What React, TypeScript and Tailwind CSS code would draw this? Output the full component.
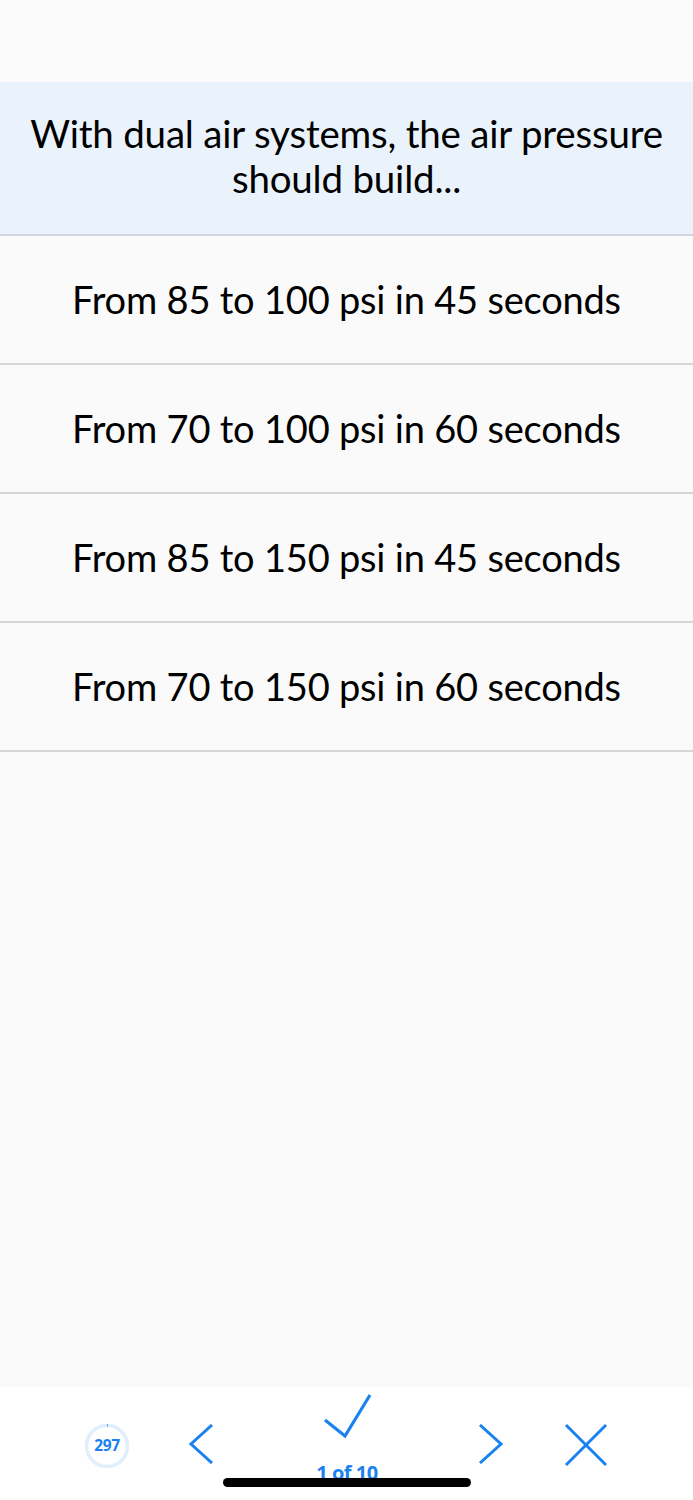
import React from 'react';

const answers = [
  'From 85 to 100 psi in 45 seconds',
  'From 70 to 100 psi in 60 seconds',
  'From 85 to 150 psi in 45 seconds',
  'From 70 to 150 psi in 60 seconds',
];

function ScoreRing() {
  return (
    <div className="relative w-[44px] h-[44px] mt-[37px] flex items-center justify-center">
      <svg width="44" height="44" viewBox="0 0 44 44" className="absolute inset-0">
        <circle cx="22" cy="22" r="20.5" fill="none" stroke="#e1eefc" strokeWidth="3.5" />
        <path d="M22 1.5 A20.5 20.5 0 0 1 22.6 1.5" fill="none" stroke="#1a82f0" strokeWidth="3" />
      </svg>
      <span className="relative text-[15.5px] font-bold text-[#1a82f0] font-['Open_Sans',sans-serif] tracking-[-0.4px]">
        297
      </span>
    </div>
  );
}

export default function App() {
  return (
    <div className="relative h-[1500px] w-full flex flex-col bg-[#fafafa] font-['Lato',sans-serif] overflow-hidden">
      {/* top spacer */}
      <div className="h-[82px] shrink-0 bg-[#fbfbfb]" />

      {/* Question */}
      <div className="h-[154px] shrink-0 bg-[#eaf3fc] border-b-2 border-[#cfd6dd] flex items-center justify-center px-2">
        <p className="text-center text-black text-[38.5px] leading-[45px] tracking-[-0.2px] pb-[4px] whitespace-nowrap">
          With dual air systems, the air pressure
          <br />
          should build...
        </p>
      </div>

      {/* Answers */}
      {answers.map((a) => (
        <div
          key={a}
          className="h-[129px] shrink-0 border-b-2 border-[#d6d6d6] flex items-center justify-center"
        >
          <span className="text-black text-[38px] tracking-[-0.2px]">{a}</span>
        </div>
      ))}

      <div className="flex-1" />

      {/* Bottom toolbar */}
      <div className="h-[113px] shrink-0 bg-white flex items-start pl-[85px]">
        <ScoreRing />
        <div className="ml-[59px] mt-[37px] w-[26px] h-[40px]">
          <svg width="26" height="40" viewBox="0 0 26 40">
            <path d="M24 1 L3 20 L24 39" fill="none" stroke="#1a82f0" strokeWidth="3" />
          </svg>
        </div>
        <div className="ml-[78px] mt-[7px] w-[110px] flex flex-col items-center">
          <svg width="50" height="44" viewBox="0 0 50 44">
            <path d="M3 26 L23 42 L48 1" fill="none" stroke="#1a82f0" strokeWidth="3.2" />
          </svg>
          <span className="mt-[23px] text-[20px] font-bold text-[#1a82f0] font-['Open_Sans',sans-serif] leading-[24px] tracking-[-0.5px]">
            1 of 10
          </span>
        </div>
        <div className="ml-[76px] mt-[37px] w-[26px] h-[40px]">
          <svg width="26" height="40" viewBox="0 0 26 40">
            <path d="M2 1 L23 20 L2 39" fill="none" stroke="#1a82f0" strokeWidth="3" />
          </svg>
        </div>
        <div className="ml-[60px] mt-[36px] w-[44px] h-[44px]">
          <svg width="44" height="44" viewBox="0 0 44 44">
            <path d="M2 2 L42 42 M42 2 L2 42" fill="none" stroke="#1a82f0" strokeWidth="3" />
          </svg>
        </div>
      </div>

      {/* Home indicator */}
      <div className="absolute left-[223px] top-[1478px] w-[248px] h-[9px] rounded-full bg-black" />
    </div>
  );
}
